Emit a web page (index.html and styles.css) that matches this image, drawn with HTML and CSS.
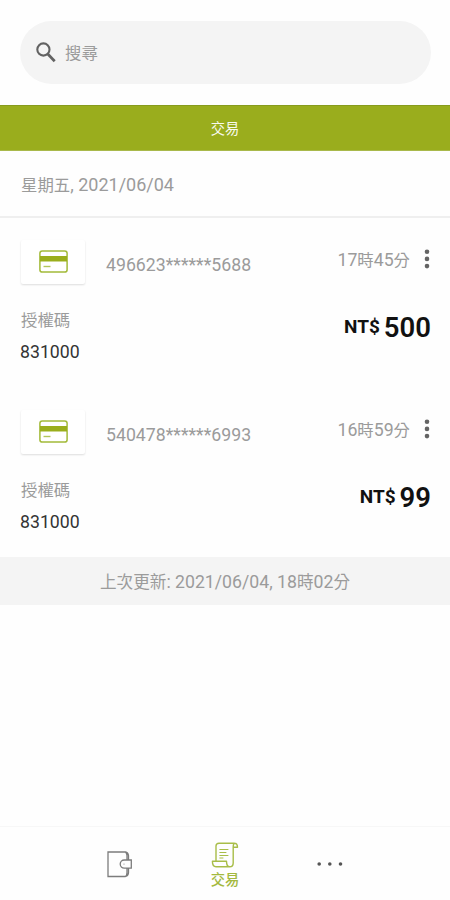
FILE: index.html
```html
<!DOCTYPE html>
<html lang="zh-Hant">
<head>
<meta charset="utf-8">
<meta name="viewport" content="width=device-width, initial-scale=1">
<title>交易</title>
<link rel="stylesheet" href="styles.css">
</head>
<body>
<div class="app">
  <header class="top">
    <div class="search">
      <svg class="search-icon" width="20" height="21" viewBox="0 0 20 21" fill="none" stroke="#626262"><circle cx="7.4" cy="7.5" r="6.1" stroke-width="2.1"/><path d="M11.8 12 18.7 19.3" stroke-width="2.7"/></svg>
      <span class="placeholder">搜尋</span>
    </div>
  </header>
  <div class="tab">交易</div>
  <main>
    <div class="date">星期五<span class="num">, 2021/06/04</span></div>
    <article class="item">
      <div class="row">
        <div class="card"><svg width="29" height="23" viewBox="0 0 29 23"><rect x=".9" y=".9" width="27.2" height="21.2" rx="2.4" fill="none" stroke="#a3bb3a" stroke-width="1.5"/><path fill="#9aae1c" d="M1 6h27v5.5H1z"/><path d="M4.5 16.5h7" stroke="#b2c65a" stroke-width="1.4"/></svg></div>
        <div class="pan num">496623******5688</div>
        <div class="time"><span class="num">17</span>時<span class="num">45</span>分</div>
        <svg class="more" width="6" height="20" viewBox="0 0 6 20" fill="#646464"><circle cx="3" cy="2.7" r="2.3"/><circle cx="3" cy="9.9" r="2.3"/><circle cx="3" cy="17.1" r="2.3"/></svg>
      </div>
      <div class="details">
        <div><div class="label">授權碼</div><div class="code num">831000</div></div>
        <div class="amount"><span class="currency">NT$</span><span>500</span></div>
      </div>
    </article>
    <article class="item">
      <div class="row">
        <div class="card"><svg width="29" height="23" viewBox="0 0 29 23"><rect x=".9" y=".9" width="27.2" height="21.2" rx="2.4" fill="none" stroke="#a3bb3a" stroke-width="1.5"/><path fill="#9aae1c" d="M1 6h27v5.5H1z"/><path d="M4.5 16.5h7" stroke="#b2c65a" stroke-width="1.4"/></svg></div>
        <div class="pan num">540478******6993</div>
        <div class="time"><span class="num">16</span>時<span class="num">59</span>分</div>
        <svg class="more" width="6" height="20" viewBox="0 0 6 20" fill="#646464"><circle cx="3" cy="2.7" r="2.3"/><circle cx="3" cy="9.9" r="2.3"/><circle cx="3" cy="17.1" r="2.3"/></svg>
      </div>
      <div class="details">
        <div><div class="label">授權碼</div><div class="code num">831000</div></div>
        <div class="amount"><span class="currency">NT$</span><span>99</span></div>
      </div>
    </article>
    <div class="updated">上次更新<span class="num">: 2021/06/04, 18</span>時<span class="num">02</span>分</div>
  </main>
  <nav class="nav">
    <a class="nav-item"><svg width="28" height="28" viewBox="0 0 28 28" fill="none" stroke="#7c7c7c" stroke-width="1.3"><path d="M22.5 9.5V5.5Q22 2.5 19.5 2H2v24.5h17.5Q22.5 25.5 22.5 22.5V18.5M19.5 2Q21 3.5 21 5.5V9.5M21 18.5v4Q21 25 19.5 26.5M25.3 10h-7a4.1 4.1 0 0 0 0 8.2h7z"/><path d="M17.5 14.1h1" stroke="#aaa"/></svg></a>
    <a class="nav-item active"><svg width="28" height="26" viewBox="0 0 28 26" fill="none" stroke="#a8bd48" stroke-width="1.4" stroke-linecap="round" stroke-linejoin="round"><path d="M5 18.5V4Q5 1.2 8 1.2H23.5Q26.5 1.2 26.5 5.3H22.2V21Q22.2 24.8 18.7 24.8H5Q1.4 24.8 1.4 19.3H15.5Q15.5 24.8 18.7 24.8M23.5 1.2Q22.2 1.8 22.2 5.3"/><path d="M8.8 7.5H17M8.8 10.5H15M8.8 13.5H17M8.8 16H12" stroke-width="1"/></svg><span>交易</span></a>
    <a class="nav-item"><svg width="28" height="6" viewBox="0 0 28 6" fill="#555"><circle cx="3.2" cy="3" r="1.8"/><circle cx="13.8" cy="3" r="1.8"/><circle cx="24.5" cy="3" r="1.8"/></svg></a>
  </nav>
</div>
</body>
</html>
```
FILE: styles.css
```css
* { box-sizing: border-box; }
body {
  margin: 0;
  background: #fefefe;
  color: #9b9b9b;
  font: 16.4px/24px Roboto, "Noto Sans CJK TC", sans-serif;
}
.app { display: flex; flex-direction: column; height: 900px; }
.num { font-size: 17.7px; }
.top { height: 105px; padding: 21px 19px 0 20px; }
.search {
  display: flex;
  align-items: center;
  gap: 9px;
  height: 63px;
  padding-left: 16px;
  border-radius: 32px;
  background: #f4f4f4;
}
.search-icon { margin-top: -1px; }
.placeholder { padding-top: 2px; }
.tab {
  height: 46px;
  border-top: 1px solid #879b1d;
  border-bottom: 1px solid #a9b94b;
  background: #9aad1d;
  color: #f8faed;
  font-size: 14.3px;
  line-height: 46px;
  text-align: center;
}
.date {
  height: 67px;
  padding: 22px 20px 0 21px;
  border-bottom: 2px solid #efefef;
}
.date .num { font-size: 18px; }
.item { height: 169.5px; padding: 22px 19px 0 21px; }
.row { display: flex; height: 44px; }
.card {
  display: flex;
  justify-content: center;
  width: 64px;
  height: 44px;
  padding-top: 10px;
  border-radius: 2px;
  background: #fff;
  box-shadow: 0 1px 2px #ddd;
}
.pan { margin: 13px 0 0 21px; }
.time { margin: 8px 14px 0 auto; }
.more { margin: 9px 1px 0 0; }
.details { display: flex; justify-content: space-between; padding-top: 25px; }
.label { height: 31px; }
.code { margin-left: -1px; color: #333; }
.amount {
  display: flex;
  align-items: baseline;
  gap: 4px;
  height: 24px;
  margin-top: 7px;
  color: #111;
  font-size: 27.5px;
  font-weight: 600;
}
.currency { position: relative; top: -4px; font-size: 19px; font-weight: 700; }
.updated {
  height: 48px;
  background: #f4f4f4;
  font-size: 16.6px;
  line-height: 50px;
  text-align: center;
}
.nav {
  display: flex;
  justify-content: center;
  height: 74px;
  margin-top: auto;
  border-top: 1px solid #f7f7f7;
}
.nav-item {
  display: flex;
  flex-direction: column;
  align-items: center;
  justify-content: center;
  width: 105px;
}
.active { justify-content: flex-start; padding-top: 15px; color: #a4b93f; font-size: 14.3px; font-weight: 500; }
```
